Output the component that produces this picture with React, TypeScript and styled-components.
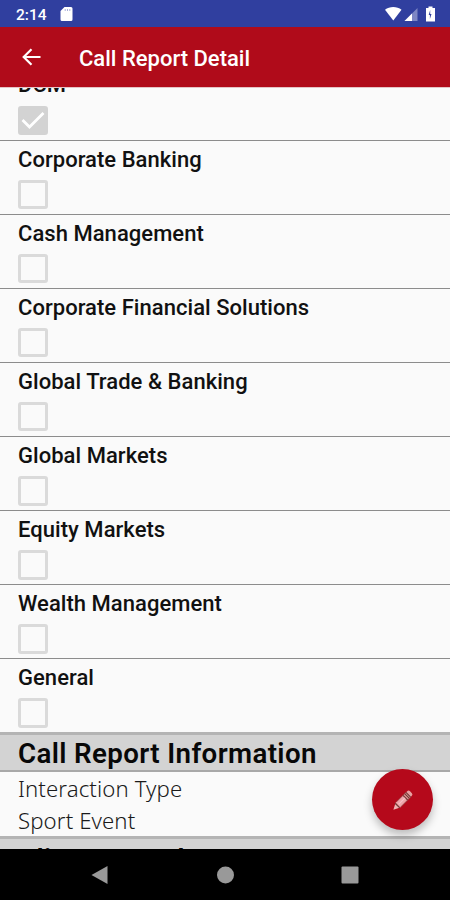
import React from 'react';
import styled, { createGlobalStyle } from 'styled-components';

const GlobalStyle = createGlobalStyle`
  * { box-sizing: border-box; }
  body { margin: 0; background: #fafafa; }
`;

const Screen = styled.div`
  position: relative;
  width: 450px;
  height: 900px;
  display: flex;
  flex-direction: column;
  overflow: hidden;
  background: #fafafa;
  color: #111;
  font-family: Roboto, 'Liberation Sans', sans-serif;
`;

const StatusBar = styled.header`
  flex: none;
  height: 26.5px;
  padding: 2px 14px 0 16px;
  display: flex;
  align-items: center;
  background: #303f9f;
  color: #fff;
`;

const Clock = styled.span`
  width: 43.5px;
  padding-top: 1px;
  font-size: 15.5px;
  font-weight: 500;
  line-height: 24px;
  white-space: nowrap;
`;

const StatusIcons = styled.div`
  margin-left: auto;
  display: flex;
  align-items: center;
`;

const AppBar = styled.div`
  flex: none;
  height: 60.5px;
  padding-left: 22px;
  display: flex;
  align-items: center;
  gap: 38px;
  background: #b00b1a;
  color: #fff;
`;

const Title = styled.h1`
  margin: 0;
  padding-top: 4px;
  font-size: 22px;
  font-weight: 500;
  line-height: 30px;
  white-space: nowrap;
`;

const Content = styled.main`
  flex: 1;
  min-height: 0;
  overflow: hidden;
  border-top: 1px solid #e5c4c6;
`;

const Scrolled = styled.div`
  margin-top: -21.4px;
`;

const CheckRow = styled.section`
  height: 74.1px;
  padding: 5px 18px 0;
  border-bottom: 1px solid #8c8c8c;

  &:last-of-type {
    height: 73px;
    border-bottom: 0;
  }
`;

const CheckList = styled.div`
  height: 665.4px;
`;

const Label = styled.div<{ $raised?: boolean }>`
  height: 34px;
  margin-top: ${(p) => (p.$raised ? '-1px' : '0')};
  margin-bottom: ${(p) => (p.$raised ? '1px' : '0')};
  font-size: 22px;
  font-weight: 500;
  line-height: 28px;
  letter-spacing: 0.04px;
  white-space: nowrap;
`;

const Box = styled.div<{ $checked?: boolean }>`
  width: 30px;
  height: 29.5px;
  display: grid;
  place-items: center;
  border: 3px solid ${(p) => (p.$checked ? '#d3d3d3' : '#dadada')};
  border-radius: 3px;
  background: ${(p) => (p.$checked ? '#d3d3d3' : 'transparent')};
`;

const SectionHeader = styled.h2<{ $inset?: number }>`
  margin: 0;
  height: 40px;
  padding: ${(p) => p.$inset ?? 1}px 18px 0;
  border-top: 3px solid #b4b4b4;
  border-bottom: 2px solid #a8a8a8;
  background: #d3d3d3;
  color: #080808;
  font-size: 27.7px;
  font-weight: 600;
  line-height: 36px;
  letter-spacing: 0.37px;
  white-space: nowrap;
`;

const Field = styled.section`
  height: 63.5px;
  padding: 0.5px 18px 0;
  font-family: 'Noto Sans', sans-serif;
  font-size: 22.2px;
  font-weight: 300;
  line-height: 32px;
  letter-spacing: 0.1px;
  color: #1a1a1a;
`;

const NavBar = styled.nav`
  flex: none;
  height: 51px;
  display: grid;
  grid-template-columns: repeat(3, 124.5px);
  justify-content: center;
  align-items: center;
  justify-items: center;
  background: #000;
`;

const EditButton = styled.button`
  position: absolute;
  left: 372px;
  top: 769px;
  width: 61px;
  height: 61px;
  padding: 0;
  display: grid;
  place-items: center;
  border: 0;
  border-radius: 50%;
  background: #b5091b;
  box-shadow: 0 5px 8px rgba(0, 0, 0, 0.25);
`;

const groups = [
  'Corporate Banking',
  'Cash Management',
  'Corporate Financial Solutions',
  'Global Trade & Banking',
  'Global Markets',
  'Equity Markets',
  'Wealth Management',
  'General',
];

const CardIcon = () => (
  <svg width="13" height="16" viewBox="0 0 13 16">
    <path d="M4.500 1H11a1.500 1.500 0 0 1 1.500 1.500v11A1.500 1.500 0 0 1 11 15H2a1.500 1.500 0 0 1-1.500-1.500V5z" fill="#fff" />
    <path d="M5.200 3v2M7.500 3v2M9.800 3v2" stroke="#a9afd8" strokeWidth="1" />
  </svg>
);

const SignalIcons = () => (
  <svg width="52" height="18" viewBox="0 0 52 18">
    <path d="M1 4.800C5.500 1 13 1 17.500 4.800L9.300 15.500z" fill="#fff" />
    <path d="M20.500 16 33.500 3v13z" fill="#7d86c4" />
    <path d="M20.500 16 28 8.500V16z" fill="#fff" />
    <path d="M42 3h2.500V1.500h4V3H51v13.500h-9V3z" fill="#fff" />
    <path d="m46.200 5-1.500 5h1.200v4l1.600-5h-1.300z" fill="#303f9f" />
  </svg>
);

const BackArrow = () => (
  <svg width="19" height="18" viewBox="0 0 19 18" fill="none" stroke="#fff" strokeWidth="2.200">
    <path d="M18.500 9H2M9.500 1.200 1.700 9l7.800 7.800" />
  </svg>
);

const CheckMark = () => (
  <svg width="24" height="20" viewBox="0 0 24 20" fill="none" stroke="#fff" strokeWidth="2.800">
    <path d="m1.500 10 7 7L22.500 3" />
  </svg>
);

const Pencil = () => (
  <svg width="22" height="22" viewBox="0 0 24 24">
    <g transform="translate(1.500 22.500) rotate(-45)">
      <path d="M0 0 7-3.600V3.600z" fill="#efb2b3" />
      <path d="M7-3.600h12v7.200H7z" fill="#efa5aa" />
      <path d="M19-3.600h5.500q2.500 0 2.500 2v3.200q0 2-2.500 2H19z" fill="#e9a0a2" />
      <path d="M6.300-3.600V3.600M18.500-3.600v7.200M21-3.600v7.200M23-3.600v7.200" stroke="#713b35" strokeWidth="1.300" />
      <path d="M8-3.600h15M8 3.600h15" stroke="#8b3d3b" strokeWidth=".8" />
      <path d="M8 0h10" stroke="#f6c5c8" strokeWidth="1.200" />
    </g>
  </svg>
);

export default function App() {
  return (
    <>
      <GlobalStyle />
      <Screen>
        <StatusBar>
          <Clock>2:14</Clock>
          <CardIcon />
          <StatusIcons>
            <SignalIcons />
          </StatusIcons>
        </StatusBar>
        <AppBar>
          <BackArrow />
          <Title>Call Report Detail</Title>
        </AppBar>
        <Content>
          <Scrolled>
            <CheckList>
              <CheckRow>
                <Label $raised>DCM</Label>
                <Box $checked>
                  <CheckMark />
                </Box>
              </CheckRow>
              {groups.map((name) => (
                <CheckRow key={name}>
                  <Label>{name}</Label>
                  <Box />
                </CheckRow>
              ))}
            </CheckList>
            <SectionHeader>Call Report Information</SectionHeader>
            <Field>
              <div>Interaction Type</div>
              <div>Sport Event</div>
            </Field>
            <SectionHeader $inset={3}>Client Attendees</SectionHeader>
          </Scrolled>
        </Content>
        <NavBar>
          <svg width="22" height="20" viewBox="0 0 22 20"><path d="M1.500 10 17.500 1v18z" fill="#999" /></svg>
          <svg width="18" height="18" viewBox="0 0 18 18"><circle cx="9.500" cy="9" r="8.500" fill="#999" /></svg>
          <svg width="18" height="18" viewBox="0 0 18 18"><rect x=".5" y=".5" width="17" height="17" rx="1" fill="#999" /></svg>
        </NavBar>
        <EditButton aria-label="Edit">
          <Pencil />
        </EditButton>
      </Screen>
    </>
  );
}
